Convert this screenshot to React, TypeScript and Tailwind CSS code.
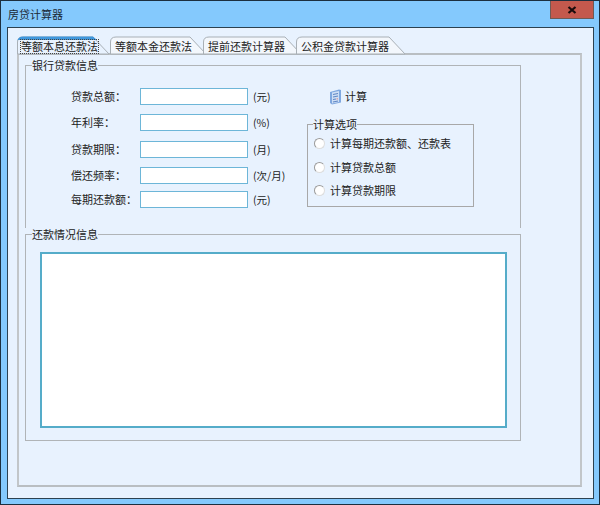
const font = { fontFamily: '"Noto Sans CJK SC", "Liberation Sans", sans-serif' };

function Tab({ label, width, active, textLeft }: { label: string; width: number; active?: boolean; textLeft: string }) {
  const h = 18;
  const d = `M0.5 ${h} V6 Q0.5 1 6 1 H${width - 17} L${width - 1} ${h}`;
  return (
    <div className={`relative h-[17px] w-[93px] shrink-0 ${active ? 'z-10' : ''}`}>
      <svg className="absolute top-0 left-0 overflow-visible" width={width} height={h}>
        <path d={`${d} Z`} fill={active ? '#e8f2fe' : '#f3f7fc'} stroke="#a9b0b6" />
        {active && <path d={`M0.5 5 Q1 0.5 6 0.5 H${width - 17} L${width - 13} 4 H0.5 Z`} fill="#3f97dc" />}
      </svg>
      <span className={`absolute top-[4px] ${textLeft} h-[13px] flex items-center text-[11px] leading-[13px] text-[#222] whitespace-nowrap ${active ? 'outline-dotted outline-1 outline-[#444]' : ''}`}>
        {label}
      </span>
    </div>
  );
}

function Row({ label, unit, mt }: { label: string; unit: string; mt: string }) {
  return (
    <div className={`flex items-center h-[17px] ${mt}`}>
      <span className="w-[69px] text-[11px] text-[#222] whitespace-nowrap">{label}</span>
      <div className="w-[108px] h-[17px] shrink-0 bg-white border border-[#6db6d8]" />
      <span className="ml-[5px] text-[10.5px] text-[#222] whitespace-nowrap">{unit}</span>
    </div>
  );
}

function Radio({ label, mt }: { label: string; mt: string }) {
  return (
    <div className={`flex items-center h-[14px] ${mt}`}>
      <span className="w-[11px] h-[11px] rounded-full bg-white border border-[#9a9a9a] border-b-[#dddddd] border-r-[#dddddd]" />
      <span className="ml-[5px] text-[11px] text-[#222] whitespace-nowrap">{label}</span>
    </div>
  );
}

export default function App() {
  return (
    <div style={font} className="w-[600px] h-[505px] overflow-hidden bg-[#84c9fd] border border-[#1c2f3f] flex flex-col">
      <div className="h-[26px] shrink-0 flex items-start justify-between pl-[7px] pr-[5px]">
        <span className="mt-[5px] text-[11px] leading-[16px] text-[#1b2a36]">房贷计算器</span>
        <div className="w-[44px] h-[18px] bg-[#c4594d] border border-[#6f5a55] border-t-0 flex items-center justify-center">
          <svg width="12" height="10" viewBox="0 0 12 10">
            <path d="M2.5 2 L9.5 8 M9.5 2 L2.5 8" stroke="#1a0c0c" strokeWidth="2.2" />
          </svg>
        </div>
      </div>
      <div className="ml-[6px] mr-[5px] h-[472px] shrink-0 bg-[#e8f2fe] border border-[#2c4150] pl-[9px] pr-[11px] pt-[8px]">
        <div className="flex h-[17px]">
          <Tab active textLeft="left-[4px]" label="等额本息还款法" width={93} />
          <Tab textLeft="left-[5px]" label="等额本金还款法" width={97} />
          <Tab textLeft="left-[5px]" label="提前还款计算器" width={99} />
          <Tab textLeft="left-[5px]" label="公积金贷款计算器" width={110} />
        </div>
        <div className="h-[434px] border-2 border-[#b9bec2] border-l-[#c2c6c9] border-r-[#c2c6c9] pt-[3px] pl-[6px] pr-[59px]">
          <fieldset className="relative h-[170px] border border-[#b0b4b7] border-b-0 pl-[45px]">
            <legend className="-ml-[39px] text-[11px] leading-[14px] text-[#222]">银行贷款信息</legend>
            <div className="flex">
              <div className="w-[236px]">
                <Row mt="mt-[16px]" label="贷款总额：" unit="(元)" />
                <Row mt="mt-[9px]" label="年利率：" unit="(%)" />
                <Row mt="mt-[10px]" label="贷款期限：" unit="(月)" />
                <Row mt="mt-[9px]" label="偿还频率：" unit="(次/月)" />
                <Row mt="mt-[7px]" label="每期还款额：" unit="(元)" />
              </div>
              <div className="w-[167px]">
                <div className="flex items-center h-[17px] mt-[16px] ml-[22px]">
                  <svg width="13" height="16" viewBox="0 0 13 16">
                    <path d="M1 3 L10 0.5 L12 1 V13.5 L3 15.5 L1 14 Z" fill="#7fa8e0" />
                    <path d="M3 3.5 L10 2 V13 L3 14.5 Z" fill="#cfdff5" />
                    <path d="M4 5.5 L9 4.5 M4 8 L9 7 M4 10.5 L7 10 M4 13 L9 12" stroke="#5f86c4" strokeWidth="1.1" />
                    <path d="M7.5 10 L9 9.7" stroke="#d98a8a" strokeWidth="1.1" />
                  </svg>
                  <span className="ml-[3px] text-[11px] text-[#222]">计算</span>
                </div>
                <fieldset className="mt-[12px] h-[90px] border border-[#a8a8a8] pl-[6px]">
                  <legend className="-ml-[1px] text-[11px] leading-[14px] text-[#222]">计算选项</legend>
                  <Radio mt="mt-[5px]" label="计算每期还款额、还款表" />
                  <Radio mt="mt-[10px]" label="计算贷款总额" />
                  <Radio mt="mt-[9px]" label="计算贷款期限" />
                </fieldset>
              </div>
            </div>
          </fieldset>
          <fieldset className="-mt-[1px] h-[214px] border border-[#b0b4b7] pl-[14px]">
            <legend className="-ml-[8px] text-[11px] leading-[14px] text-[#222]">还款情况信息</legend>
            <div className="mt-[11px] w-[467px] h-[176px] bg-white border-2 border-[#55acc9]" />
          </fieldset>
        </div>
      </div>
    </div>
  );
}
